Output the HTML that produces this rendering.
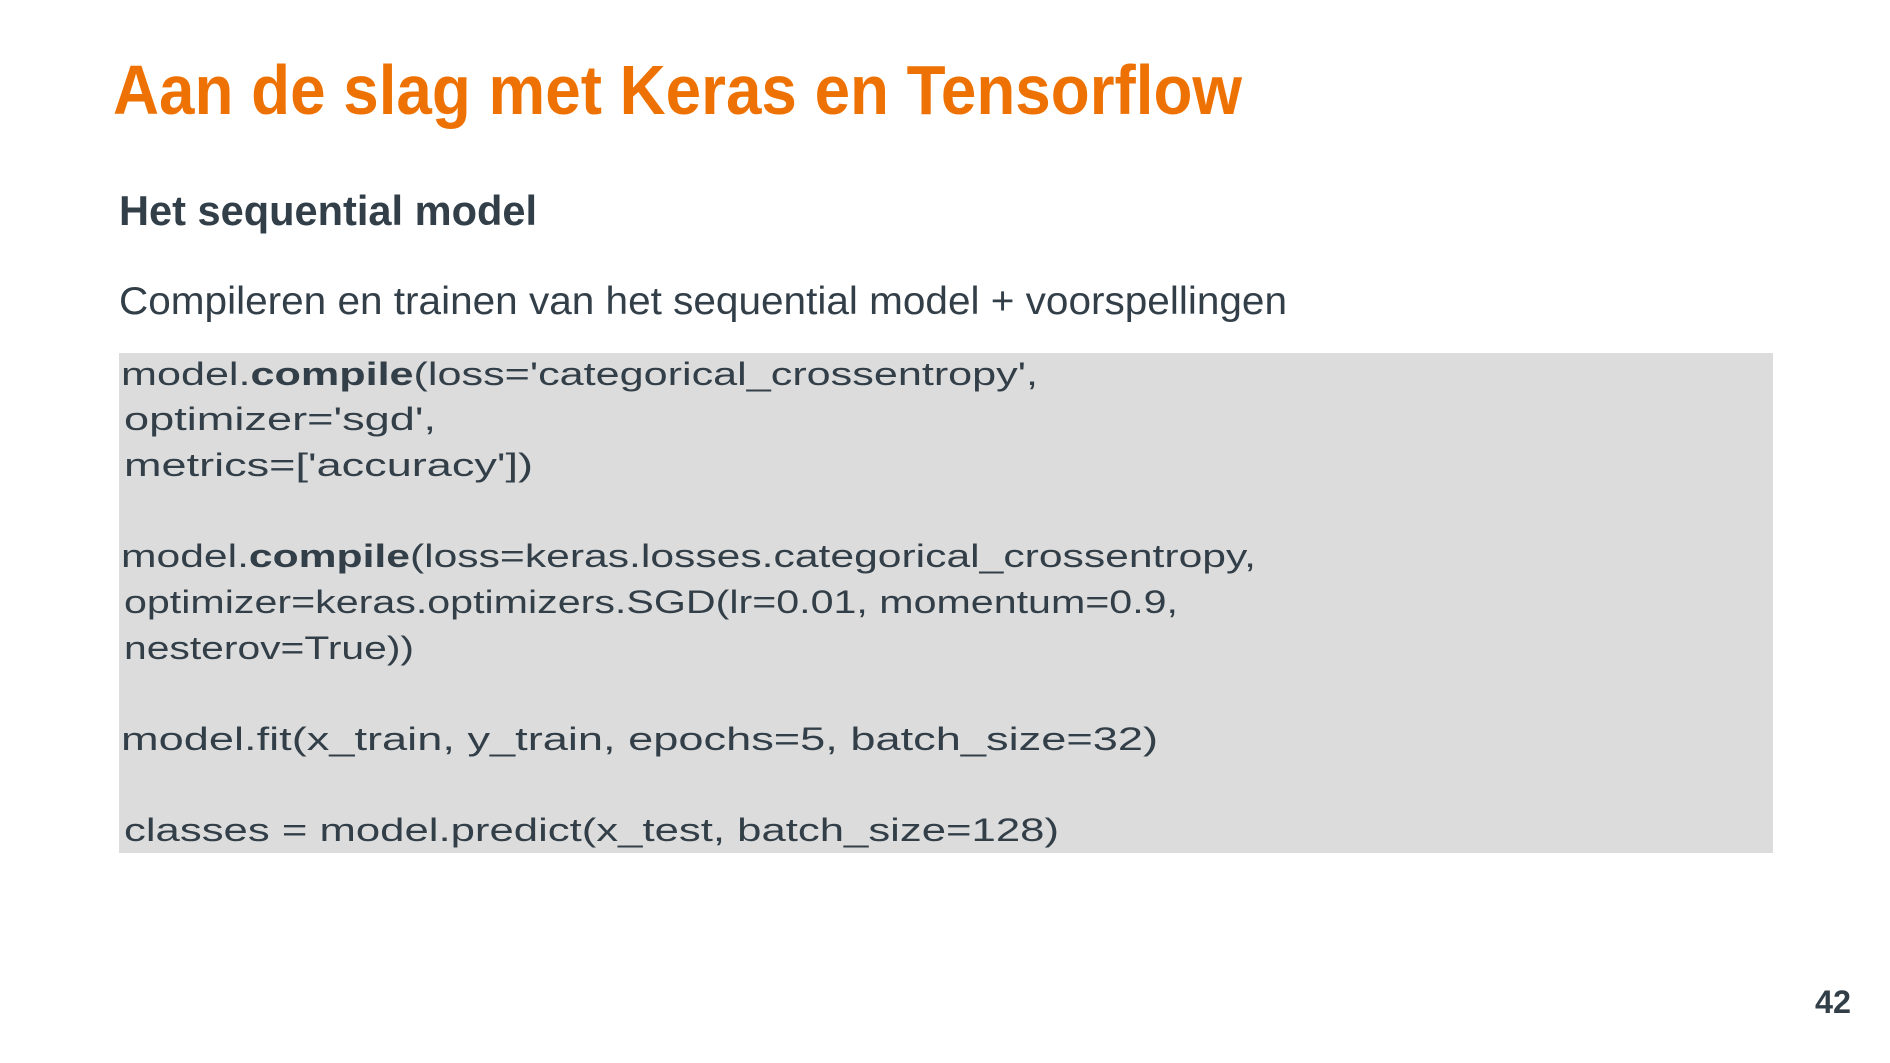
<!DOCTYPE html>
<html><head><meta charset="utf-8"><style>
html,body{margin:0;padding:0;background:#fff;}
body{width:1890px;height:1063px;overflow:hidden;position:relative;}
svg{position:absolute;left:0;top:0;}
</style></head><body>
<svg width="1890" height="1063" xmlns="http://www.w3.org/2000/svg">
<rect x="119" y="353" width="1654" height="500" fill="#dcdcdc"/>
<text x="113" y="114" font-family="Liberation Sans, sans-serif" font-weight="bold" font-size="70" fill="#ee7203" textLength="1129" lengthAdjust="spacingAndGlyphs">Aan de slag met Keras en Tensorflow</text>
<text x="119" y="225" font-family="Liberation Sans, sans-serif" font-weight="bold" font-size="42" fill="#333f48" textLength="418" lengthAdjust="spacingAndGlyphs">Het sequential model</text>
<text x="119" y="314" font-family="Liberation Sans, sans-serif" font-size="39" fill="#333f48" textLength="1168" lengthAdjust="spacingAndGlyphs">Compileren en trainen van het sequential model + voorspellingen</text>
<g font-family="Liberation Sans, sans-serif" font-size="32" fill="#333f48" xml:space="preserve">
<text x="121" y="385" textLength="917" lengthAdjust="spacingAndGlyphs">model.<tspan font-weight="bold">compile</tspan>(loss='categorical_crossentropy',</text>
<text x="124" y="430" textLength="312" lengthAdjust="spacingAndGlyphs">optimizer='sgd',</text>
<text x="124" y="476" textLength="409" lengthAdjust="spacingAndGlyphs">metrics=['accuracy'])</text>
<text x="121" y="567" textLength="1135" lengthAdjust="spacingAndGlyphs">model.<tspan font-weight="bold">compile</tspan>(loss=keras.losses.categorical_crossentropy,</text>
<text x="124" y="613" textLength="1054" lengthAdjust="spacingAndGlyphs">optimizer=keras.optimizers.SGD(lr=0.01, momentum=0.9,</text>
<text x="124" y="659" textLength="290" lengthAdjust="spacingAndGlyphs">nesterov=True))</text>
<text x="121" y="750" textLength="1037" lengthAdjust="spacingAndGlyphs">model.fit(x_train,  y_train,  epochs=5,  batch_size=32)</text>
<text x="124" y="841" textLength="935" lengthAdjust="spacingAndGlyphs">classes  =  model.predict(x_test,  batch_size=128)</text>
</g>
<text x="1815" y="1013" font-family="Liberation Sans, sans-serif" font-weight="bold" font-size="32" fill="#333f48" textLength="36" lengthAdjust="spacingAndGlyphs">42</text>
</svg>
</body></html>
